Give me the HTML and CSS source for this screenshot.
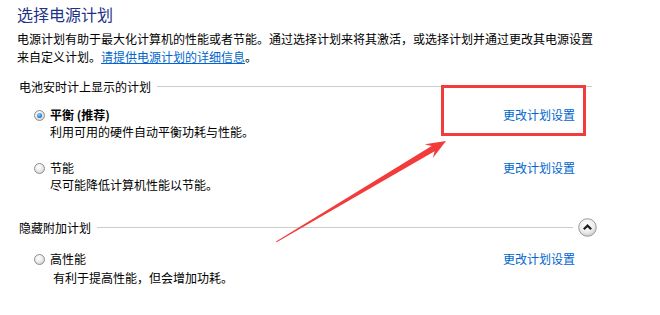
FILE: index.html
```html
<!DOCTYPE html>
<html lang="zh-CN">
<head>
<meta charset="utf-8">
<title>选择电源计划</title>
<link rel="stylesheet" href="styles.css">
</head>
<body>
<div class="page">
  <h1 class="title">选择电源计划</h1>
  <p class="desc"><span class="line">电源计划有助于最大化计算机的性能或者节能。通过选择计划来将其激活，或选择计划并通过更改其电源设置</span><span class="line">来自定义计划。<a class="link" href="#">请提供电源计划的详细信息</a>。</span></p>

  <div class="section">
    <div class="section-head"><span class="label">电池安时计上显示的计划</span><span class="rule"></span></div>
    <div class="plans">
      <div class="plan">
        <span class="radio checked"></span>
        <span class="name bold">平衡 (推荐)</span>
        <a class="link plan-link" href="#">更改计划设置</a>
        <span class="plan-desc">利用可用的硬件自动平衡功耗与性能。</span>
      </div>
      <div class="plan">
        <span class="radio"></span>
        <span class="name">节能</span>
        <a class="link plan-link" href="#">更改计划设置</a>
        <span class="plan-desc">尽可能降低计算机性能以节能。</span>
      </div>
    </div>
  </div>

  <div class="section section-hidden">
    <div class="section-head"><span class="label">隐藏附加计划</span><span class="rule rule-short"></span>
      <svg class="collapse" width="19" height="19" viewBox="0 0 19 19">
        <defs>
          <radialGradient id="cg" cx="45%" cy="35%" r="70%">
            <stop offset="0" stop-color="#ffffff"/>
            <stop offset="0.6" stop-color="#ececec"/>
            <stop offset="1" stop-color="#c4c4c4"/>
          </radialGradient>
        </defs>
        <circle cx="9.5" cy="9.5" r="8.8" fill="url(#cg)" stroke="#9a9a9a" stroke-width="1"/>
        <path d="M5.8 11.2 L9.5 7.6 L13.2 11.2" fill="none" stroke="#1e1e1e" stroke-width="2.2" stroke-linejoin="miter"/>
      </svg>
    </div>
    <div class="plans plans-hidden">
      <div class="plan">
        <span class="radio"></span>
        <span class="name">高性能</span>
        <a class="link plan-link" href="#">更改计划设置</a>
        <span class="plan-desc indent">有利于提高性能，但会增加功耗。</span>
      </div>
    </div>
  </div>

  <div class="highlight"></div>
  <svg class="arrow" width="660" height="315" viewBox="0 0 660 315">
    <polygon points="276,241.5 431.6,146 424.7,144.2 446,141 432.9,158 434.6,151.2 276.6,242.3" fill="#f23b3b"/>
  </svg>
</div>
</body>
</html>
```

FILE: styles.css
```css
html, body {
  margin: 0;
  padding: 0;
  background: #ffffff;
}

body {
  font-family: "Noto Sans CJK SC", "Noto Sans", sans-serif;
  font-size: 12px;
  color: #000000;
}

.page {
  position: relative;
  width: 660px;
  height: 315px;
  box-sizing: border-box;
  padding: 3px 0 0 17px;
  overflow: hidden;
}

.title {
  margin: 0;
  font-size: 16px;
  line-height: 22px;
  font-weight: normal;
  color: #1e3287;
}

.desc {
  margin: 5px 0 0 0;
  width: 590px;
  line-height: 17.5px;
}

.line {
  display: block;
  white-space: nowrap;
}

.link {
  color: #0066cc;
  text-decoration: none;
}

.desc .link {
  text-decoration: underline;
}

.section {
  width: 575px;
  margin-top: 13px;
}

.section-hidden {
  width: 580px;
  margin-top: 25px;
}

.section-head {
  display: flex;
  align-items: center;
  padding-left: 2px;
  line-height: 17px;
}

.rule {
  flex: 1;
  height: 1px;
  background: #cccccc;
  margin-left: 6px;
}

.rule-short {
  margin-right: 5px;
}

.collapse {
  display: block;
  flex: none;
}

.plans {
  display: flex;
  flex-direction: column;
  gap: 19px;
  margin-top: 11px;
  padding-left: 17px;
}

.plans-hidden {
  margin-top: 13px;
}

.plan {
  display: grid;
  grid-template-columns: 16px 1fr auto;
  align-items: center;
  line-height: 17px;
}

.plan-link {
  grid-column: 3;
  grid-row: 1;
  margin-right: 17px;
}

.section-hidden .plan-link {
  margin-right: 22px;
}

.name {
  grid-column: 2;
  grid-row: 1;
}

.bold {
  font-weight: bold;
}

.plan-desc {
  grid-column: 2;
  grid-row: 2;
}

.indent {
  padding-left: 3px;
  padding-top: 2px;
}

.radio {
  grid-column: 1;
  grid-row: 1;
  width: 11px;
  height: 11px;
  box-sizing: border-box;
  border-radius: 50%;
  border: 1px solid #8d8d8d;
  background: radial-gradient(circle at 40% 35%, #ffffff 0%, #eeeeee 40%, #c8c8c8 100%);
  position: relative;
  margin-top: 1px;
}

.radio.checked::after {
  content: "";
  position: absolute;
  left: 2px;
  top: 2px;
  width: 5px;
  height: 5px;
  border-radius: 50%;
  background: radial-gradient(circle at 40% 35%, #8fd3ff 0%, #2a86d4 55%, #15467f 100%);
}

.highlight {
  position: absolute;
  left: 441px;
  top: 85px;
  width: 145px;
  height: 51px;
  box-sizing: border-box;
  border: 3px solid #f23b3b;
}

.arrow {
  position: absolute;
  left: 0;
  top: 0;
  pointer-events: none;
}
```
